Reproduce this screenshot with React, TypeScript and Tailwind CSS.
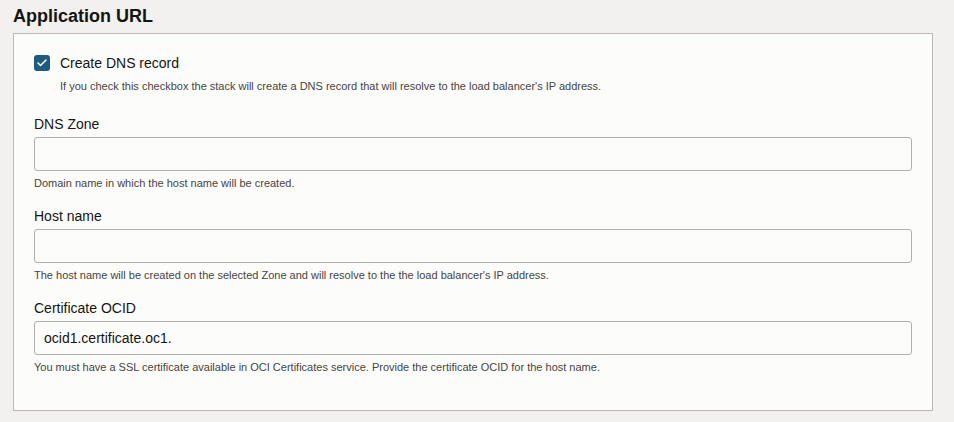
import { Check } from "lucide-react";

function Field({
  label,
  help,
  value,
}: {
  label: string;
  help: string;
  value?: string;
}) {
  return (
    <div className="flex flex-col">
      <label className="text-[14px] leading-[20px] text-[#161513]">{label}</label>
      <div className="mt-[3px] h-[34px] flex items-center rounded-[3px] border border-[#b3aea9] bg-[#fcfcfb] pl-[9px] text-[14px] text-[#161513]">
        {value}
      </div>
      <p className="mt-[4px] text-[11px] leading-[16px] text-[#47443f]">{help}</p>
    </div>
  );
}

export default function App() {
  return (
    <div className="min-h-[422px] w-[954px] bg-[#f2f1f0] pl-[13px] pr-[21px] pt-[4px] font-['Liberation_Sans',Arial,sans-serif]">
      {/* Section title */}
      <h2 className="text-[18px] leading-[24px] font-bold text-[#161513] h-[29px]">Application URL</h2>

      {/* Panel */}
      <div className="border border-[#bdb8b3] bg-[#fcfcfb] px-[20px] pt-[19px] pb-[35px] flex flex-col">
        <div className="flex items-center gap-[10px] h-[20px]">
          <div className="size-[16px] rounded-[3px] bg-[#1f5b7d] flex items-center justify-center">
            <Check className="size-[12px] text-white" strokeWidth={3} />
          </div>
          <span className="text-[14px] leading-[20px] text-[#161513]">Create DNS record</span>
        </div>
        <p className="ml-[26px] mt-[5px] text-[11px] leading-[16px] text-[#47443f]">
          If you check this checkbox the stack will create a DNS record that will resolve to the load balancer's IP address.
        </p>

        <div className="mt-[20px] flex flex-col gap-[15px]">
          <Field label="DNS Zone" help="Domain name in which the host name will be created." />
          <Field
            label="Host name"
            help="The host name will be created on the selected Zone and will resolve to the the load balancer's IP address."
          />
          <Field
            label="Certificate OCID"
            value="ocid1.certificate.oc1."
            help="You must have a SSL certificate available in OCI Certificates service. Provide the certificate OCID for the host name."
          />
        </div>
      </div>
    </div>
  );
}
